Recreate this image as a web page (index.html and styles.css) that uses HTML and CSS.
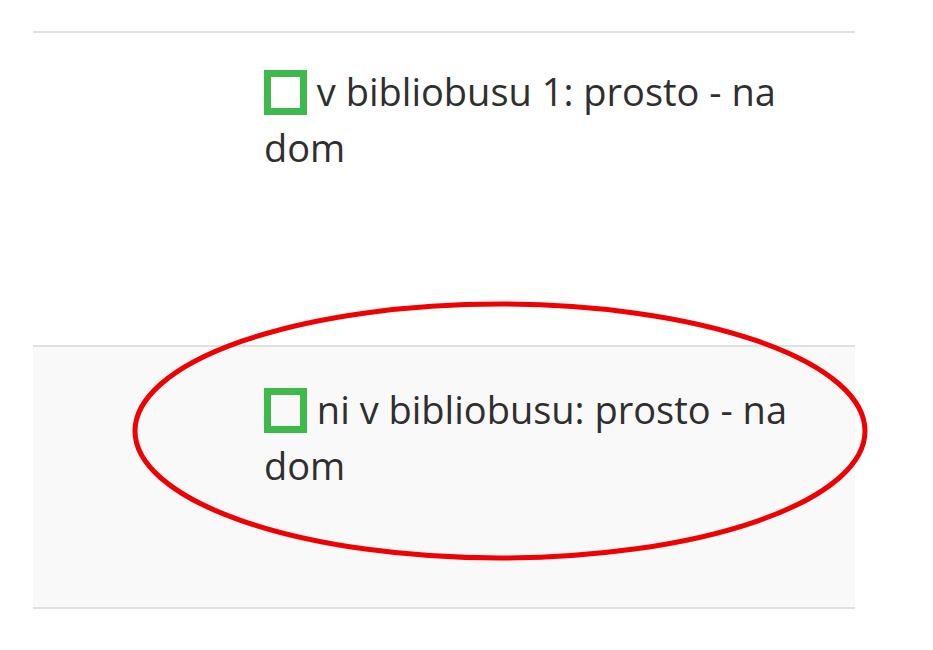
FILE: index.html
```html
<!DOCTYPE html>
<html lang="sl">
<head>
<meta charset="utf-8">
<title>Zaloga</title>
<link rel="stylesheet" href="styles.css">
</head>
<body>
<div class="page">
  <table class="holdings">
    <tbody>
      <tr class="row row-first">
        <td class="cell-blank"></td>
        <td class="cell-status"><span class="box"></span> v bibliobusu 1: prosto - na dom</td>
      </tr>
      <tr class="row row-striped">
        <td class="cell-blank"></td>
        <td class="cell-status"><span class="box"></span> ni v bibliobusu: prosto - na dom</td>
      </tr>
    </tbody>
  </table>
  <svg class="mark" width="740" height="264" viewBox="0 0 740 264" aria-hidden="true">
    <ellipse cx="368" cy="130" rx="365" ry="127" fill="none" stroke="#f00000" stroke-width="5"/>
  </svg>
</div>
</body>
</html>
```

FILE: styles.css
```css
html, body {
  margin: 0;
  padding: 0;
  background: #ffffff;
}

.page {
  position: relative;
  width: 933px;
  height: 650px;
  padding-top: 31px;
  box-sizing: border-box;
  font-family: "Open Sans", "DejaVu Sans", sans-serif;
  color: #2f2f2f;
}

.holdings {
  margin-left: 33px;
  width: 822px;
  border-collapse: collapse;
}

.row td {
  border-top: 2px solid #e0e0e0;
  vertical-align: top;
  padding: 30px 0 0 0;
  font-size: 38px;
  line-height: 56px;
}

.row-first td {
  height: 282px;
}

.row-striped td {
  background: #f9f9f9;
  border-bottom: 2px solid #e0e0e0;
  height: 226px;
  padding-top: 34px;
}

.cell-blank {
  width: 231px;
}

.cell-status {
  padding-right: 36px !important;
}

.box {
  display: inline-block;
  width: 29px;
  height: 31px;
  border: 7px solid #3dba4b;
  vertical-align: -9px;
  box-sizing: content-box;
}

.mark {
  position: absolute;
  left: 132px;
  top: 301px;
}
```
